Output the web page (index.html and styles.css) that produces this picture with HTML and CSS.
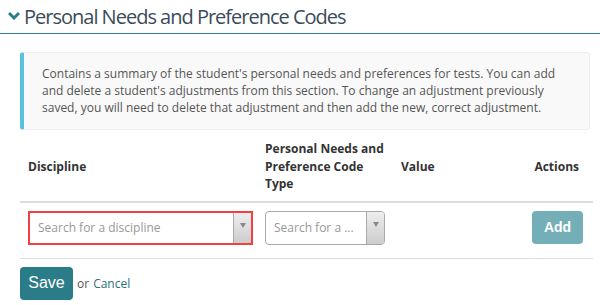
FILE: index.html
```html
<!DOCTYPE html>
<html>
<head>
    <title>Personal Needs and Preference Codes</title>
    <link rel="stylesheet" href="styles.css">
</head>
<body>
    <h2 class="section-title">
        <svg class="chevron" width="12" height="9" viewBox="0 0 12 9">
            <path d="M1 2 L6 7 L11 2" fill="none" stroke="#2a7f8e" stroke-width="3" />
        </svg>
        Personal Needs and Preference Codes
    </h2>
    <div class="info-box">
        Contains a summary of the student's personal needs and preferences for tests. You can add
        and delete a student's adjustments from this section. To change an adjustment previously
        saved, you will need to delete that adjustment and then add the new, correct adjustment.
    </div>
    <table class="pnp-table">
        <thead>
            <tr>
                <th class="col-discipline">Discipline</th>
                <th class="col-type">Personal Needs and Preference Code Type</th>
                <th class="col-value">Value</th>
                <th class="col-actions">Actions</th>
            </tr>
        </thead>
        <tbody>
            <tr>
                <td>
                    <div class="select select-error select-wide">
                        <span class="placeholder">Search for a discipline</span>
                        <span class="arrow"><i></i></span>
                    </div>
                </td>
                <td>
                    <div class="select select-narrow">
                        <span class="placeholder">Search for a ...</span>
                        <span class="arrow"><i></i></span>
                    </div>
                </td>
                <td></td>
                <td class="col-actions">
                    <button class="btn btn-add" disabled>Add</button>
                </td>
            </tr>
        </tbody>
    </table>
    <div class="form-actions">
        <button class="btn btn-save">Save</button>
        <span class="or">or</span> <a href="#" class="cancel">Cancel</a>
    </div>
</body>
</html>
```

FILE: styles.css
```css
body {
    margin: 0;
    font-family: "Open Sans", sans-serif;
    color: #333;
    background-color: #fff;
}

.section-title {
    margin: 0;
    padding: 0 0 0 8px;
    height: 33px;
    line-height: 30px;
    font-size: 20px;
    font-weight: normal;
    letter-spacing: -1px;
    color: #3b4b5b;
    border-bottom: 1px solid #2a8593;
    display: flex;
    align-items: center;
    gap: 4px;
}

.chevron {
    margin-top: -3px;
}

.info-box {
    margin: 18px 10px 0 20px;
    padding: 12px 18px 13px 18px;
    font-size: 12px;
    line-height: 17px;
    color: #555;
    background-color: #f9f9f9;
    border: 1px solid #eee;
    border-left: 4px solid #5bc0de;
    border-radius: 3px;
}

.pnp-table {
    margin: 6px 7px 0 20px;
    width: 573px;
    border-collapse: collapse;
    font-size: 12px;
}

.pnp-table th {
    text-align: left;
    vertical-align: middle;
    font-weight: bold;
    line-height: 17.5px;
    padding: 4px 8px 8px 8px;
    border-bottom: 2px solid #ddd;
    color: #333;
}

.col-discipline {
    width: 222px;
}

.pnp-table .col-type {
    width: 120px;
    padding-left: 4px;
}

.pnp-table th.col-type {
    vertical-align: bottom;
}

.col-value {
    width: 90px;
}

.pnp-table th.col-actions,
.pnp-table td.col-actions {
    text-align: right;
    padding-right: 13px;
}

.pnp-table th.col-actions {
    padding-right: 14px;
}

.pnp-table td {
    padding: 8px 8px 13px 8px;
    vertical-align: top;
    border-bottom: 1px solid #ddd;
}

.pnp-table td:nth-child(2) {
    padding-left: 4px;
}

.pnp-table tbody td:last-child {
    padding-right: 10px;
}

.select {
    display: flex;
    height: 34px;
    box-sizing: border-box;
    border: 1px solid #aaa;
    border-radius: 4px;
    background-color: #fff;
    overflow: hidden;
}

.select-wide {
    width: 225px;
}

.select-narrow {
    width: 120px;
}

.select-error {
    border: 2px solid #f04040;
    border-radius: 0;
}

.placeholder {
    flex: 1;
    padding-left: 8px;
    line-height: 32px;
    font-size: 12px;
    color: #999;
    white-space: nowrap;
    overflow: hidden;
}

.select-error .placeholder {
    line-height: 30px;
}

.arrow {
    width: 18px;
    border-left: 1px solid #aaa;
    background: linear-gradient(to bottom, #eee, #ccc);
    display: flex;
    justify-content: center;
    padding-top: 10px;
    box-sizing: border-box;
}

.arrow i {
    width: 0;
    height: 0;
    border-left: 3px solid transparent;
    border-right: 3px solid transparent;
    border-top: 5px solid #888;
}

.btn {
    font-family: "Liberation Sans", Arial, sans-serif;
    color: #fff;
    border: none;
    border-radius: 4px;
    height: 33px;
    cursor: pointer;
}

.btn-add {
    background-color: #74aeb7;
    font-size: 14px;
    font-weight: bold;
    width: 51px;
}

.form-actions {
    margin: 8px 0 0 20px;
    font-size: 12px;
    display: flex;
    align-items: center;
    gap: 4px;
}

.btn-save {
    background-color: #2a7d88;
    font-size: 16px;
    width: 53px;
}

.or {
    color: #555;
}

.cancel {
    color: #2a6f7c;
    text-decoration: none;
}
```
